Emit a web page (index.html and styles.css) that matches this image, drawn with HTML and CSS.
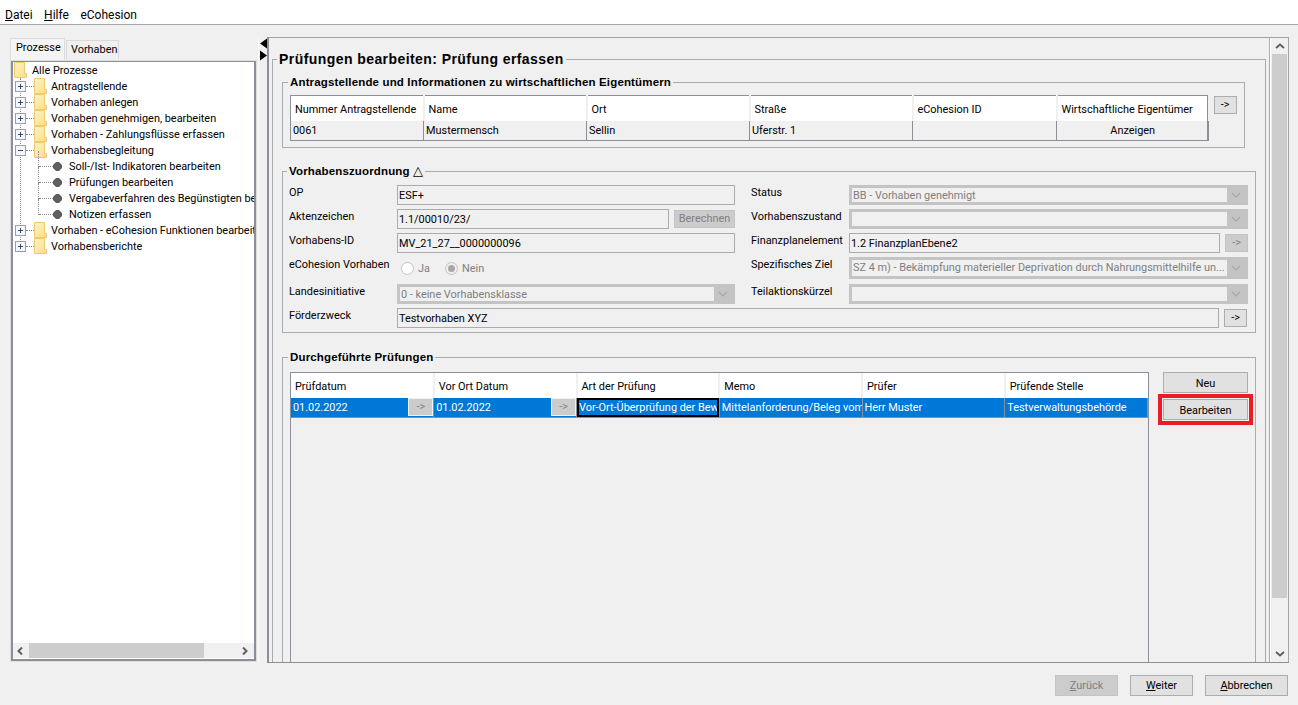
FILE: index.html
```html
<!DOCTYPE html>
<html lang="de">
<head>
<meta charset="utf-8">
<title>Prüfung erfassen</title>
<link rel="stylesheet" href="styles.css">
</head>
<body>
<svg class="defs" width="0" height="0" aria-hidden="true">
  <defs>
    <linearGradient id="fg" x1="0" y1="0" x2="1" y2="1"><stop offset="0" stop-color="#fff3c8"/><stop offset="1" stop-color="#fbdc82"/></linearGradient>
    <symbol id="folder" viewBox="0 0 13 16"><path d="M0.5 0.5H10.5V11.5H12.5V15.5H0.5Z" fill="url(#fg)" stroke="#eccb70"/></symbol>
    <symbol id="plus" viewBox="0 0 11 11"><rect x=".5" y=".5" width="10" height="10" fill="#f4f6fb" stroke="#9aa0aa"/><path d="M3 5.5H8M5.5 3V8" stroke="#2c4a80"/></symbol>
    <symbol id="minus" viewBox="0 0 11 11"><rect x=".5" y=".5" width="10" height="10" fill="#f4f6fb" stroke="#9aa0aa"/><path d="M3 5.5H8" stroke="#2c4a80"/></symbol>
    <symbol id="bullet" viewBox="0 0 9 9"><path d="M3 0H6L9 3V6L6 9H3L0 6V3Z" fill="#5f5f5f"/></symbol>
    <symbol id="chev" viewBox="0 0 10 6"><path d="M1 1L5 5L9 1" fill="none" stroke="#a8a8a8" stroke-width="1.2"/></symbol>
  </defs>
</svg>

<nav class="menubar">
  <span class="menu-item"><u>D</u>atei</span>
  <span class="menu-item"><u>H</u>ilfe</span>
  <span class="menu-item">eCohesion</span>
</nav>

<div class="workspace">
  <aside class="side">
    <div class="tabs">
      <span class="tab tab-active">Prozesse</span>
      <span class="tab">Vorhaben</span>
    </div>
    <div class="treebox">
      <ul class="tree">
        <li class="node lvl0"><svg class="ic-folder"><use href="#folder"/></svg><span>Alle Prozesse</span></li>
        <li class="node lvl1"><svg class="ic-tog"><use href="#plus"/></svg><i class="dash"></i><svg class="ic-folder"><use href="#folder"/></svg><span>Antragstellende</span></li>
        <li class="node lvl1"><svg class="ic-tog"><use href="#plus"/></svg><i class="dash"></i><svg class="ic-folder"><use href="#folder"/></svg><span>Vorhaben anlegen</span></li>
        <li class="node lvl1"><svg class="ic-tog"><use href="#plus"/></svg><i class="dash"></i><svg class="ic-folder"><use href="#folder"/></svg><span>Vorhaben genehmigen, bearbeiten</span></li>
        <li class="node lvl1"><svg class="ic-tog"><use href="#plus"/></svg><i class="dash"></i><svg class="ic-folder"><use href="#folder"/></svg><span>Vorhaben - Zahlungsflüsse erfassen</span></li>
        <li class="node lvl1"><svg class="ic-tog"><use href="#minus"/></svg><i class="dash"></i><svg class="ic-folder"><use href="#folder"/></svg><span>Vorhabensbegleitung</span></li>
        <li class="node lvl2"><i class="dash2"></i><svg class="ic-bullet"><use href="#bullet"/></svg><span>Soll-/Ist- Indikatoren bearbeiten</span></li>
        <li class="node lvl2"><i class="dash2"></i><svg class="ic-bullet"><use href="#bullet"/></svg><span>Prüfungen bearbeiten</span></li>
        <li class="node lvl2"><i class="dash2"></i><svg class="ic-bullet"><use href="#bullet"/></svg><span>Vergabeverfahren des Begünstigten bearbeiten</span></li>
        <li class="node lvl2"><i class="dash2"></i><svg class="ic-bullet"><use href="#bullet"/></svg><span>Notizen erfassen</span></li>
        <li class="node lvl1"><svg class="ic-tog"><use href="#plus"/></svg><i class="dash"></i><svg class="ic-folder"><use href="#folder"/></svg><span>Vorhaben - eCohesion Funktionen bearbeiten</span></li>
        <li class="node lvl1"><svg class="ic-tog"><use href="#plus"/></svg><i class="dash"></i><svg class="ic-folder"><use href="#folder"/></svg><span>Vorhabensberichte</span></li>
      </ul>
      <div class="hscroll">
        <svg class="sb-arrow" viewBox="0 0 8 8"><path d="M6 .5L2.5 4L6 7.5" fill="none" stroke="#606060" stroke-width="2"/></svg>
        <div class="hscroll-track"><div class="hscroll-thumb"></div></div>
        <svg class="sb-arrow" viewBox="0 0 8 8"><path d="M2 .5L5.5 4L2 7.5" fill="none" stroke="#606060" stroke-width="2"/></svg>
      </div>
    </div>
  </aside>

  <div class="divider">
    <svg class="tri" viewBox="0 0 7 10"><path d="M7 0V10L0 5Z" fill="#000"/></svg>
    <svg class="tri" viewBox="0 0 7 10"><path d="M0 0V10L7 5Z" fill="#000"/></svg>
  </div>

  <main class="scroller">
    <div class="viewport">
      <fieldset class="fs fs-main">
        <legend class="lg-main">Prüfungen bearbeiten: Prüfung erfassen</legend>

        <fieldset class="fs fs-a">
          <legend>Antragstellende und Informationen zu wirtschaftlichen Eigentümern</legend>
          <div class="fs-a-row">
            <table class="tbl tbl-a">
              <colgroup><col class="ca1"><col class="ca2"><col class="ca2"><col class="ca2"><col class="ca5"><col class="ca6"></colgroup>
              <thead><tr><th>Nummer Antragstellende</th><th>Name</th><th>Ort</th><th>Straße</th><th>eCohesion ID</th><th>Wirtschaftliche Eigentümer</th></tr></thead>
              <tbody><tr><td>0061</td><td>Mustermensch</td><td>Sellin</td><td>Uferstr. 1</td><td></td><td class="center">Anzeigen</td></tr></tbody>
            </table>
            <button class="btn btn-arrow btn-arrow-top">-&gt;</button>
          </div>
        </fieldset>

        <fieldset class="fs fs-b">
          <legend>Vorhabenszuordnung <span class="delta">△</span></legend>
          <div class="form">
            <label class="lbl">OP</label>
            <div class="field">ESF+</div>
            <label class="lbl lbl-r">Status</label>
            <div class="combo"><span class="combo-text">BB - Vorhaben genehmigt</span><span class="combo-btn"><svg class="chev"><use href="#chev"/></svg></span></div>

            <label class="lbl">Aktenzeichen</label>
            <div class="pair"><div class="field grow">1.1/00010/23/</div><button class="btn btn-dis btn-calc">Berechnen</button></div>
            <label class="lbl lbl-r">Vorhabenszustand</label>
            <div class="combo"><span class="combo-text"></span><span class="combo-btn"><svg class="chev"><use href="#chev"/></svg></span></div>

            <label class="lbl">Vorhabens-ID</label>
            <div class="field">MV_21_27__0000000096</div>
            <label class="lbl lbl-r">Finanzplanelement</label>
            <div class="pair"><div class="field grow">1.2 FinanzplanEbene2</div><button class="btn btn-dis btn-arrow">-&gt;</button></div>

            <label class="lbl">eCohesion Vorhaben</label>
            <div class="radios">
              <span class="radio"><i class="dot"></i>Ja</span>
              <span class="radio"><i class="dot dot-on"></i>Nein</span>
            </div>
            <label class="lbl lbl-r">Spezifisches Ziel</label>
            <div class="combo combo-tall"><span class="combo-text">SZ 4 m) - Bekämpfung materieller Deprivation durch Nahrungsmittelhilfe un...</span><span class="combo-btn"><svg class="chev"><use href="#chev"/></svg></span></div>

            <label class="lbl">Landesinitiative</label>
            <div class="combo"><span class="combo-text">0 - keine Vorhabensklasse</span><span class="combo-btn"><svg class="chev"><use href="#chev"/></svg></span></div>
            <label class="lbl lbl-r">Teilaktionskürzel</label>
            <div class="combo"><span class="combo-text"></span><span class="combo-btn"><svg class="chev"><use href="#chev"/></svg></span></div>

            <label class="lbl">Förderzweck</label>
            <div class="pair span3"><div class="field grow">Testvorhaben XYZ</div><button class="btn btn-arrow">-&gt;</button></div>
          </div>
        </fieldset>

        <fieldset class="fs fs-c">
          <legend>Durchgeführte Prüfungen</legend>
          <div class="fs-c-row">
            <div class="tbl-wrap">
              <table class="tbl tbl-c">
                <thead><tr><th>Prüfdatum</th><th>Vor Ort Datum</th><th>Art der Prüfung</th><th>Memo</th><th>Prüfer</th><th>Prüfende Stelle</th></tr></thead>
                <tbody><tr class="selected">
                  <td><div class="datecell"><span>01.02.2022</span><button class="btn btn-dis btn-cell">-&gt;</button></div></td>
                  <td><div class="datecell"><span>01.02.2022</span><button class="btn btn-dis btn-cell">-&gt;</button></div></td>
                  <td class="focus"><div class="clip">Vor-Ort-Überprüfung der Bewilligung</div></td>
                  <td><div class="clip">Mittelanforderung/Beleg vom</div></td>
                  <td>Herr Muster</td>
                  <td>Testverwaltungsbehörde</td>
                </tr></tbody>
              </table>
            </div>
            <div class="side-btns">
              <button class="btn btn-wide">Neu</button>
              <div class="highlight"><button class="btn btn-wide">Bearbeiten</button></div>
            </div>
          </div>
        </fieldset>
      </fieldset>
    </div>
    <div class="vscroll">
      <svg class="sb-arrow-v" viewBox="0 0 10 8"><path d="M1 6L5 2.5L9 6" fill="none" stroke="#606060" stroke-width="2"/></svg>
      <div class="vscroll-track"><div class="vscroll-thumb"></div></div>
      <svg class="sb-arrow-v" viewBox="0 0 10 8"><path d="M1 2L5 5.5L9 2" fill="none" stroke="#606060" stroke-width="2"/></svg>
    </div>
  </main>
</div>

<footer class="footer">
  <button class="btn btn-foot btn-dis"><u>Z</u>urück</button>
  <button class="btn btn-foot"><u>W</u>eiter</button>
  <button class="btn btn-foot btn-foot-l"><u>A</u>bbrechen</button>
</footer>
</body>
</html>
```
FILE: styles.css
```css
* { box-sizing: border-box; }
html, body { margin: 0; height: 705px; overflow: hidden; }
body {
  background: #f0f0f0;
  color: #000;
  font: 10.9px/14px Roboto, "Noto Sans", sans-serif;
  display: flex;
  flex-direction: column;
}
.defs { position: absolute; }

/* menu */
.menubar {
  height: 25px;
  flex: none;
  background: #fff;
  border-bottom: 1px solid #a8a8a8;
  display: flex;
  align-items: center;
  padding: 5px 0 0 5px;
  gap: 11.5px;
  font-size: 12px;
}

.workspace { flex: 1; min-height: 0; display: flex; }

/* left */
.side { width: 249px; margin: 13px 0 0 10px; flex: none; display: flex; flex-direction: column; height: 625px; border-right: 1px solid #fafafa; }
.tabs { height: 23px; display: flex; align-items: flex-start; flex: none; }
.tab {
  height: 19px;
  padding: 2px 4px 0;
  margin-top: 2px;
  background: #f0f0f0;
  border: 1px solid #d9d9d9;
  border-bottom: 0;
  width: 53px;
  margin-left: 1px;
}
.tab-active { height: 23px; width: 55px; margin: 0; padding: 2px 5px 0; background: #f4f4f4; border-color: #dcdcdc; }
.treebox {
  width: 245px;
  margin-left: 1px;
  height: 600px;
  background: #fff;
  border: 2px solid #8a8f98;
  border-top-width: 1px;
  outline: 1px solid #dedede;
  display: flex;
  flex-direction: column;
  overflow: hidden;
}
.tree { list-style: none; margin: 0; padding: 0; flex: 1; min-height: 0; position: relative; white-space: nowrap; overflow: hidden; }
.tree::before {
  content: "";
  position: absolute;
  left: 7px;
  top: 16px;
  height: 168px;
  border-left: 1px dotted #8a8a8a;
}
.node { height: 16px; display: flex; align-items: center; position: relative; }
.node span { position: relative; top: 1px; }
.lvl0 { padding-left: 1px; }
.lvl1 { padding-left: 2px; }
.lvl2 { padding-left: 26px; }
.ic-folder { width: 13px; height: 16px; margin-right: 5px; flex: none; }
.lvl1 .ic-folder { margin-right: 4px; }
.ic-tog { width: 11px; height: 11px; flex: none; position: relative; }
.dash { width: 8px; margin-right: 0; height: 0; border-top: 1px dotted #8a8a8a; flex: none; }
.dash2 { position: relative; width: 14px; height: 0; border-top: 1px dotted #8a8a8a; flex: none; }
.dash2::before { content: ""; position: absolute; left: -1px; bottom: 0; height: 16px; border-left: 1px dotted #8a8a8a; }
.ic-bullet { width: 9px; height: 9px; margin: 0 7px 0 0; flex: none; }
.hscroll { height: 15px; flex: none; background: #f0f0f0; display: flex; align-items: center; margin-bottom: 1px; }
.sb-arrow { width: 8px; height: 8px; margin: 0 5px 0 3px; flex: none; }
.hscroll-track { flex: 1; height: 15px; }
.hscroll-thumb { width: 175px; height: 15px; background: #cdcdcd; }

/* divider */
.divider { width: 8px; flex: none; padding: 13px 0 0 1px; display: flex; flex-direction: column; gap: 1px; }
.tri { width: 7px; height: 11px; display: block; }

/* scroller */
.scroller {
  flex: none;
  width: 1022px;
  height: 626px;
  margin-top: 12px;
  border: 1px solid #a0a3a8;
  border-left: 2px solid #8a8f98;
  border-bottom: 1px solid #8a8f98;
  display: flex;
}
.viewport { flex: 1; min-width: 0; padding: 13px 3px 0 3px; overflow: hidden; border-right: 1px solid #a8abb0; }
.vscroll { width: 18px; flex: none; background: #f0f0f0; display: flex; flex-direction: column; align-items: center; border-left: 1px solid #fff; }
.sb-arrow-v { width: 10px; height: 8px; margin: 4px 0; flex: none; }
.vscroll-track { flex: 1; width: 15px; }
.vscroll-thumb { width: 15px; height: 544px; background: #cdcdcd; }

/* fieldsets */
.fs { margin: 0; min-width: 0; border: 1px solid #a8abb0; }
.fs legend {
  font: bold 11.5px/14px "Liberation Sans", Arial, sans-serif;
  letter-spacing: .15px;
  padding: 0 2px;
  margin-left: -2px;
}
.fs-main { padding: 8px 9px 0; }
.fs .lg-main { font-size: 14px; line-height: 16px; letter-spacing: .43px; margin-left: -5px; }
.fs-a { padding: 6px 6px 6px 7px; margin-right: 11px; }
.fs-b { padding: 7px 6px 5px; margin-top: 16px; }
.fs-c { padding: 8px 6px 0 7px; margin-top: 17px; height: 400px; }
.delta { font: bold 13px/14px "DejaVu Sans", sans-serif; }

/* tables */
.fs-a-row { display: flex; gap: 5px; align-items: flex-start; }
.tbl { table-layout: fixed; border-collapse: collapse; }
.tbl th { background: #fff; font-weight: normal; text-align: left; padding: 2px 0 0 4px; border-right: 2px solid #f0f0f0; white-space: nowrap; overflow: hidden; }
.tbl th:last-child { border-right: 0; }
.tbl td { padding: 1px 0 0 2px; white-space: nowrap; overflow: hidden; border-right: 1px solid #8a8f98; }
.tbl-a { width: 918px; border: 1px solid #8a8f98; }
.tbl-a th { height: 25px; padding-top: 3px; }
.tbl-a td { height: 20px; }
.tbl-a td:last-child { border-right-width: 2px; }
.ca1 { width: 133px; }
.ca2 { width: 163px; }
.ca5 { width: 144px; }
.ca6 { width: 151px; }
.center { text-align: center; }
.btn {
  font: inherit;
  color: #000;
  padding: 0;
  background: #e1e1e1;
  border: 1px solid #adadad;
  flex: none;
}
.btn-dis { background: #cccccc; color: #808080; border-color: #c4c4c4; }
.btn-arrow { width: 23px; height: 18px; }
.btn-arrow-top { margin-top: 1px; }
.btn-calc { width: 61px; height: 18px; }

/* form */
.form {
  display: grid;
  grid-template-columns: 108px 338px 114px 399px;
  grid-template-rows: 20px 20px 20px 23px 20px 19px;
  row-gap: 4px;
}
.lbl { white-space: nowrap; padding-top: 1px; }
.lbl-r { padding-left: 16px; }
.field { height: 20px; border: 1px solid #a8abb0; padding: 3px 1px 0; white-space: nowrap; overflow: hidden; }
.grow { flex: 1; min-width: 0; }
.pair { display: flex; align-items: center; gap: 5px; }
.span3 { grid-column: 2 / 5; padding-right: 1px; }
.combo { display: flex; background: #c4c4c4; border: 3px solid #c4c4c4; min-width: 0; color: #7f7f7f; }
.combo-tall { height: 22px; }
.combo-text { flex: 1; min-width: 0; background: #f0f0f0; padding: 1px 0 0 1px; white-space: nowrap; overflow: hidden; }
.combo-btn { width: 18px; flex: none; display: flex; align-items: center; justify-content: center; }
.chev { width: 10px; height: 6px; }
.radios { display: flex; gap: 15px; align-items: center; padding-left: 4px; color: #7f7f7f; }
.radio { display: flex; align-items: center; gap: 4px; }
.dot { width: 13px; height: 13px; border-radius: 50%; background: #fff; border: 1px solid #c4c4c4; position: relative; }
.dot-on { background: #f0f0f0; }
.dot-on::after { content: ""; position: absolute; left: 2px; top: 2px; width: 7px; height: 7px; border-radius: 50%; background: #a8a8a8; }

/* checks table */
.fs-c-row { display: flex; gap: 14px; align-items: flex-start; }
.tbl-wrap { width: 859px; height: 380px; border: 1px solid #8a8f98; flex: none; }
.tbl-c { width: 857px; }
.tbl-c th { height: 25px; }
.tbl-c td { height: 19px; }
.selected td { background: #0078d7; color: #fff; border-bottom: 1px solid #8a8f98; }
.datecell { display: flex; align-items: center; justify-content: space-between; }
.datecell span { padding-top: 2px; }
.btn-cell { width: 25px; height: 18px; border: 1px solid #f0f0f0; margin-right: 0; }
.tbl-c td:nth-child(-n+2) { padding-right: 0; padding-top: 0; }
.focus { outline: 2px solid #000; outline-offset: -2px; }
.clip { overflow: hidden; }
.side-btns { display: flex; flex-direction: column; align-items: flex-start; gap: 1px; }
.btn-wide { width: 85px; height: 21px; padding-top: 2px; }
.highlight { border: 4px solid #ed1c24; padding: 1px; margin-left: -5px; }

/* footer */
.footer { height: 42px; flex: none; display: flex; justify-content: flex-end; align-items: flex-start; gap: 12px; padding: 12px 10px 0 0; }
.btn-foot { width: 63px; height: 21px; }
.btn-foot-l { width: 83px; }
```
